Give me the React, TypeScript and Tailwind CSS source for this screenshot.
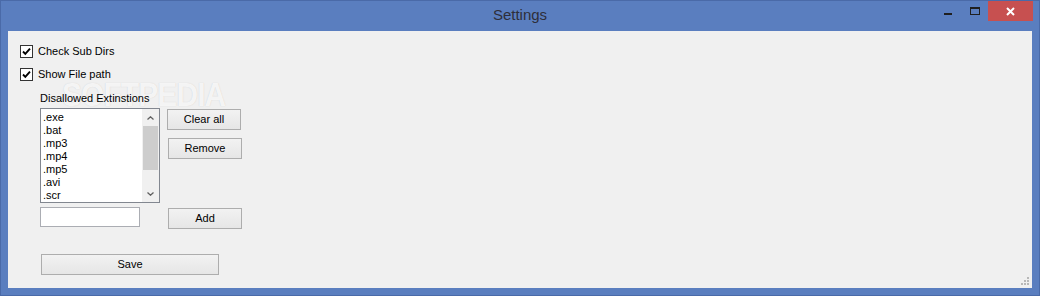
import React from 'react'

const items = ['.exe', '.bat', '.mp3', '.mp4', '.mp5', '.avi', '.scr']

function CheckRow({ label }: { label: string }) {
    return (
        <div className="flex items-center h-[13px]">
            <div className="w-[13px] h-[13px] border border-[#333333] bg-white flex items-center justify-center">
                <svg width="11" height="11" viewBox="0 0 11 11">
                    <path d="M2 5.5 L4.3 7.8 L9 2.6" fill="none" stroke="#000" strokeWidth="1.9" />
                </svg>
            </div>
            <span className="ml-[5px] leading-[13px]">{label}</span>
        </div>
    )
}

function Button({ label, className }: { label: string; className: string }) {
    return (
        <div
            className={`h-[21px] border border-[#adadad] bg-gradient-to-b from-[#f2f2f2] to-[#e6e6e6] flex items-center justify-center leading-[13px] ${className}`}
        >
            {label}
        </div>
    )
}

export default function App() {
    return (
        <div className="w-[1040px] h-[296px] border border-[#4a6aa8] bg-[#5a7ebf] flex flex-col font-['Liberation_Sans',Arial,sans-serif] text-[11px] text-black">
            {/* Title bar */}
            <div className="h-[30px] grid grid-cols-[1fr_auto_1fr]">
                <div />
                <div className="flex items-center text-[15px] text-[#2e2e3a] pb-[1px]">Settings</div>
                <div className="flex justify-end items-start pr-[6px]">
                    <div className="w-[8px] h-[2px] bg-[#1f1f1f] mt-[12px] mr-[18px]" />
                    <div className="w-[10px] h-[8px] border border-t-2 border-[#1f1f1f] mt-[6px] mr-[8px]" />
                    <div className="w-[45px] h-[20px] bg-[#c75050] flex items-center justify-center">
                        <svg width="9" height="9" viewBox="0 0 9 9">
                            <path d="M1 1 L8 8 M8 1 L1 8" stroke="#fff" strokeWidth="2" />
                        </svg>
                    </div>
                </div>
            </div>

            {/* Client area */}
            <div className="relative mx-[7px] h-[257px] bg-[#f0f0f0] flex flex-col">
                {/* watermark, sits behind the controls */}
                <div className="absolute left-[54px] top-[46px] pointer-events-none flex items-start">
                    <span className="text-[34px] font-bold leading-[34px] text-white/80 tracking-[-1px] [text-shadow:0_0_1px_rgba(150,150,150,0.45)] scale-x-[0.88] origin-left inline-block">
                        SOFTPEDIA
                    </span>
                </div>

                <div className="relative pl-[12px] pt-[14px] flex flex-col">
                    <CheckRow label="Check Sub Dirs" />
                    <div className="mt-[10px]">
                        <CheckRow label="Show File path" />
                    </div>

                    <div className="ml-[20px] flex flex-col">
                        <div className="mt-[11px] leading-[13px]">Disallowed Extinstions</div>

                        <div className="mt-[3px] flex">
                            <div className="w-[120px] h-[95px] border border-[#828790] bg-white flex">
                                <div className="flex-1 pt-[2px] pl-[2px]">
                                    {items.map((it) => (
                                        <div key={it} className="h-[13px] leading-[13px]">{it}</div>
                                    ))}
                                </div>
                                <div className="w-[17px] bg-[#f0f0f0] flex flex-col">
                                    <div className="h-[17px] flex items-center justify-center">
                                        <svg width="7" height="4" viewBox="0 0 7 4">
                                            <path d="M0.5 3.5 L3.5 0.8 L6.5 3.5" fill="none" stroke="#606060" strokeWidth="1.3" />
                                        </svg>
                                    </div>
                                    <div className="h-[44px] mx-[1px] bg-[#cdcdcd]" />
                                    <div className="flex-1" />
                                    <div className="h-[17px] flex items-center justify-center">
                                        <svg width="7" height="4" viewBox="0 0 7 4">
                                            <path d="M0.5 0.5 L3.5 3.2 L6.5 0.5" fill="none" stroke="#606060" strokeWidth="1.3" />
                                        </svg>
                                    </div>
                                </div>
                            </div>
                            <div className="ml-[7px] pt-[1px] flex flex-col">
                                <Button label="Clear all" className="w-[74px]" />
                                <Button label="Remove" className="w-[74px] ml-[1px] mt-[8px]" />
                            </div>
                        </div>

                        <div className="mt-[4px] flex">
                            <div className="w-[100px] h-[20px] border border-[#abadb3] bg-white" />
                            <Button label="Add" className="w-[74px] ml-[28px] mt-[1px]" />
                        </div>

                        <Button label="Save" className="w-[178px] ml-[1px] mt-[25px]" />
                    </div>
                </div>

                {/* resize grip */}
                <svg className="mt-auto self-end mr-[2px] mb-[2px]" width="9" height="9" viewBox="0 0 9 9">
                    <rect x="6" y="0" width="2" height="2" fill="#b8b8b8" />
                    <rect x="3" y="3" width="2" height="2" fill="#b8b8b8" />
                    <rect x="6" y="3" width="2" height="2" fill="#b8b8b8" />
                    <rect x="0" y="6" width="2" height="2" fill="#b8b8b8" />
                    <rect x="3" y="6" width="2" height="2" fill="#b8b8b8" />
                    <rect x="6" y="6" width="2" height="2" fill="#b8b8b8" />
                </svg>
            </div>
        </div>
    )
}
